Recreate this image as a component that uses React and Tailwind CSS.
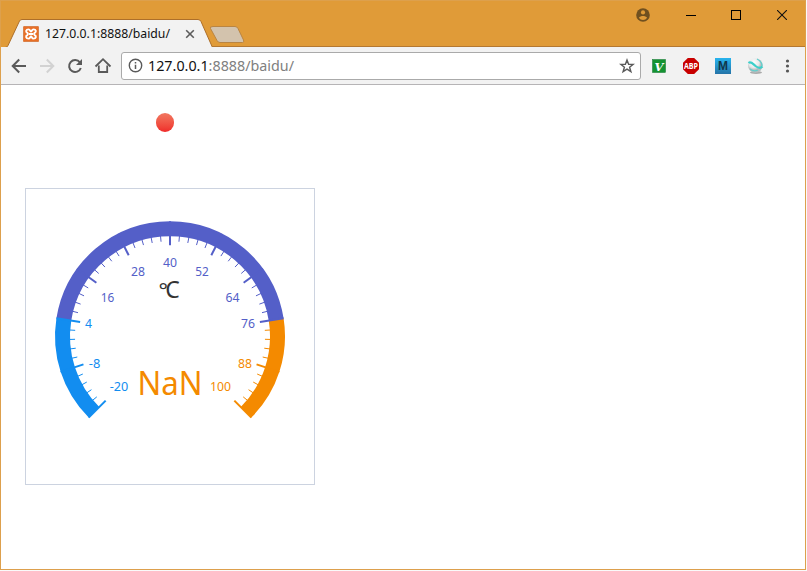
import React from "react";

const BLUE = "#128df0";
const PURPLE = "#545fc8";
const ORANGE = "#f48a00";

const CX = 144;
const CY = 147.3;

function polar(radius, fraction) {
  const angle = ((225 - 270 * fraction) * Math.PI) / 180;
  return [CX + radius * Math.cos(angle), CY - radius * Math.sin(angle)];
}

function arcPath(from, to) {
  const [x1, y1] = polar(107.5, from);
  const [x2, y2] = polar(107.5, to);
  const large = (to - from) * 270 > 180 ? 1 : 0;
  return `M${x1} ${y1}A107.5 107.5 0 ${large} 1 ${x2} ${y2}`;
}

function tickColor(i) {
  if (i <= 10) return BLUE;
  if (i <= 40) return PURPLE;
  return ORANGE;
}

const labels = [
  { text: "-20", x: 93, y: 202, w: 18.5, color: BLUE },
  { text: "-8", x: 68.5, y: 179, w: 11.5, color: BLUE },
  { text: "4", x: 62.5, y: 139, w: 7, color: BLUE },
  { text: "16", x: 81.5, y: 113, w: 13.5, color: PURPLE },
  { text: "28", x: 112, y: 87, w: 14, color: PURPLE },
  { text: "40", x: 144, y: 78, w: 14, color: PURPLE },
  { text: "52", x: 176, y: 87, w: 13.5, color: PURPLE },
  { text: "64", x: 206.5, y: 113, w: 14, color: PURPLE },
  { text: "76", x: 222, y: 139, w: 14, color: PURPLE },
  { text: "88", x: 219, y: 179, w: 14, color: ORANGE },
  { text: "100", x: 194.5, y: 202, w: 21, color: ORANGE },
];

function Gauge() {
  const ticks = Array.from({ length: 51 }, (_, i) => i);
  return (
    <svg width="288" height="295" className="block font-['Noto_Sans',sans-serif]">
      <path d={arcPath(0, 0.2)} fill="none" stroke={BLUE} strokeWidth="15" />
      <path d={arcPath(0.2, 0.8)} fill="none" stroke={PURPLE} strokeWidth="15" />
      <path d={arcPath(0.8, 1)} fill="none" stroke={ORANGE} strokeWidth="15" />
      {ticks.map((i) => {
        const major = i % 5 === 0;
        const [x1, y1] = polar(major ? 115 : 101, i / 50);
        const [x2, y2] = polar(major ? 91 : 95, i / 50);
        return (
          <line key={i} x1={x1} y1={y1} x2={x2} y2={y2} stroke={tickColor(i)} strokeWidth={major ? 2 : 1} />
        );
      })}
      {labels.map((l) => (
        <text key={l.text} x={l.x} y={l.y} fill={l.color} fontSize="12" textAnchor="middle" textLength={l.w} lengthAdjust="spacingAndGlyphs">
          {l.text}
        </text>
      ))}
      <text y="109" fill="#333">
        <tspan x="132.500" fontSize="22">°</tspan>
        <tspan x="139.300" fontSize="23">C</tspan>
      </text>
      <text x="144" y="206" fontSize="32" fill={ORANGE} textAnchor="middle" textLength="65" lengthAdjust="spacingAndGlyphs">
        NaN
      </text>
    </svg>
  );
}

function TabStrip() {
  return (
    <div className="relative h-[46px] bg-[#e09b38]">
      <svg width="260" height="29" className="absolute left-0 top-[17px]">
        <path d="M0 29.5H4Q6 29.5 7 27.5L18.5 3Q19.3 1.5 21 1.5H197Q199 1.5 200 3.5L211.5 29.5V31H0Z" fill="#f2f2f2" stroke="#ad6f29" />
        <path d="M212 8.500H234Q236 8.500 237 10.500L242.500 22Q243.500 24.500 241.500 24.500H219Q217 24.500 216 22.500L209.500 10.500Q208.500 8.500 212 8.500Z" fill="#d3c3ad" stroke="#ba8542" />
      </svg>
      <div className="relative flex h-full items-start">
        <div className="ml-[22px] mt-[25px] h-4 w-4">
          <svg width="16" height="16" viewBox="0 0 16 16">
            <rect width="16" height="16" rx="1.5" fill="#e96f26" />
            <rect x=".5" y=".5" width="15" height="15" rx="1" fill="none" stroke="#d7824d" />
            <path d="M5.500 3.400C2.800 3.400 2.400 6 4.300 6.900 5.100 7.400 5.100 8.600 4.300 9.100 2.400 10 2.800 12.600 5.500 12.600 7.500 12.600 6.800 10.500 8 10.500S8.500 12.600 10.500 12.600C13.200 12.600 13.600 10 11.700 9.100 10.900 8.600 10.900 7.400 11.700 6.900 13.600 6 13.200 3.400 10.500 3.400 8.500 3.400 9.200 5.500 8 5.500S7.500 3.400 5.500 3.400ZM6 8H10" fill="none" stroke="#fff" strokeWidth="1.900" />
          </svg>
        </div>
        <svg width="128" height="20" className="ml-[6px] mt-[23px]">
          <text x="0" y="14" fontSize="12" fill="#111" textLength="125" lengthAdjust="spacingAndGlyphs" className="font-['Noto_Sans',sans-serif]">127.0.0.1:8888/baidu/</text>
        </svg>
        <svg width="10" height="10" className="ml-3 mt-7">
          <path d="M1.200 1.200L8.800 8.800M8.800 1.200L1.200 8.800" stroke="#5c5c5c" strokeWidth="1.600" />
        </svg>
        <div className="mr-[18px] flex flex-1 items-center justify-end pt-[7px]">
          <svg width="14" height="14" viewBox="0 0 14 14" className="mr-9">
            <circle cx="7" cy="7" r="6.800" fill="#70501f" />
            <circle cx="7" cy="4.400" r="2.100" fill="#e09b38" />
            <path d="M2.900 9.700C3.500 8.400 5.600 7.900 7 7.900S10.500 8.400 11.100 9.700A4.900 4.900 0 0 1 2.900 9.700Z" fill="#e09b38" />
          </svg>
          <div className="mr-[35px] h-px w-[10px] bg-black" />
          <div className="mr-9 h-[10px] w-[10px] border border-black" />
          <svg width="10" height="10">
            <path d="M0 0L10 10M10 0L0 10" stroke="#111" strokeWidth="1.100" />
          </svg>
        </div>
      </div>
      <div className="absolute bottom-0 left-[211px] right-0 h-px bg-[#b47832]" />
    </div>
  );
}

function Toolbar() {
  return (
    <div className="flex h-[38px] items-center border-b border-[#b6b4b6] bg-[#f2f2f2]">
      <svg width="120" height="37" fill="none" stroke="#5a5a5a" strokeWidth="2">
        <path d="M25 19H12.500M18.200 12.500L11.700 19L18.200 25.500" />
        <path d="M39 19H51.500M45.800 12.500L52.300 19L45.800 25.500" stroke="#d2d2d2" />
        <path d="M78.900 15.400A6 6 0 1 0 79.800 21" />
        <path d="M81 12V18H75Z" fill="#5a5a5a" stroke="none" />
        <path d="M97.800 18.500V25H106.200V18.500M94.500 19.500L102 12.200L109.500 19.500" strokeWidth="1.800" />
      </svg>
      <div className="flex h-7 w-[520px] items-center rounded-[3px] border border-[#aaa] bg-white">
        <svg width="15" height="15" className="ml-[6px]" fill="none" stroke="#5a5a5a">
          <circle cx="7.500" cy="7.500" r="6.200" strokeWidth="1.400" />
          <path d="M7.500 6.700V11M7.500 4V5.500" strokeWidth="1.500" />
        </svg>
        <svg width="160" height="24" className="ml-[5px]">
          <text x="0" y="17" fontSize="14.500" fill="#111" textLength="146" lengthAdjust="spacingAndGlyphs" className="font-['Noto_Sans',sans-serif]">
            127.0.0.1<tspan fill="#808080">:8888/baidu/</tspan>
          </text>
        </svg>
        <svg width="16" height="16" viewBox="0 0 16 16" className="ml-auto mr-[5px]">
          <path d="M8 2L9.600 6.200L14.200 6.400L10.600 9.300L11.900 13.700L8 11.200L4.100 13.700L5.400 9.300L1.800 6.400L6.400 6.200Z" fill="none" stroke="#5a5a5a" strokeWidth="1.400" />
        </svg>
      </div>
      <svg width="164" height="37" className="font-['Liberation_Sans',sans-serif]">
        <rect x="11.500" y="12.500" width="13" height="13" fill="#159332" stroke="#0c752a" strokeWidth=".5" />
        <text x="18" y="23.500" textAnchor="middle" fontFamily="DejaVu Serif, serif" fontSize="11.500" fontWeight="bold" fontStyle="italic" fill="#fff">V</text>
        <path d="M46.800 11H53.200L58 15.800V22.200L53.200 27H46.800L42 22.200V15.800Z" fill="#c80000" />
        <text x="50" y="22" textAnchor="middle" fontFamily="Open Sans, sans-serif" fontSize="8.500" fontWeight="bold" fill="#fff" textLength="14" lengthAdjust="spacingAndGlyphs">ABP</text>
        <defs>
          <linearGradient id="mBlue" x2="0" y2="1"><stop stopColor="#28b4ee" /><stop offset="1" stopColor="#2574a8" /></linearGradient>
          <radialGradient id="pearl" cx=".4" cy=".3"><stop stopColor="#fff" /><stop offset=".7" stopColor="#e6e8e9" /><stop offset="1" stopColor="#b8bdbf" /></radialGradient>
        </defs>
        <rect x="74" y="11" width="16" height="16" fill="url(#mBlue)" />
        <text x="82" y="23" textAnchor="middle" fontSize="12" fontWeight="bold" fill="#10364b" textLength="10" lengthAdjust="spacingAndGlyphs">M</text>
        <ellipse cx="115" cy="25.500" rx="6" ry="1.500" fill="#aaa" />
        <circle cx="114.300" cy="18.500" r="7.300" fill="url(#pearl)" />
        <path d="M107.500 16C110 14 112 17 114.500 19S119 22 121.500 19.500" fill="none" stroke="#3ccfca" strokeWidth="2.200" />
        <path d="M116 12C119 13.500 121 16 121 19M109 22C112 24.500 115 24 117 23" fill="none" stroke="#63cecc" strokeWidth="1.300" />
        <g fill="#555"><circle cx="146.500" cy="14" r="1.600" /><circle cx="146.500" cy="19" r="1.600" /><circle cx="146.500" cy="24" r="1.600" /></g>
      </svg>
    </div>
  );
}

export default function App() {
  return (
    <div className="h-[571px] w-[807px] overflow-hidden bg-[#fafafa]">
      <div className="flex h-[570px] w-[806px] flex-col border border-[#dda04d] bg-white">
        <TabStrip />
        <Toolbar />
        <div className="mt-[28px] ml-[155px] h-[19px] w-[18px] rounded-full bg-linear-to-b from-[#f17660] to-[#ef2929]" />
        <div className="ml-6 mt-[56px] h-[297px] w-[290px] border border-[#ccd3e0]">
          <Gauge />
        </div>
      </div>
    </div>
  );
}
